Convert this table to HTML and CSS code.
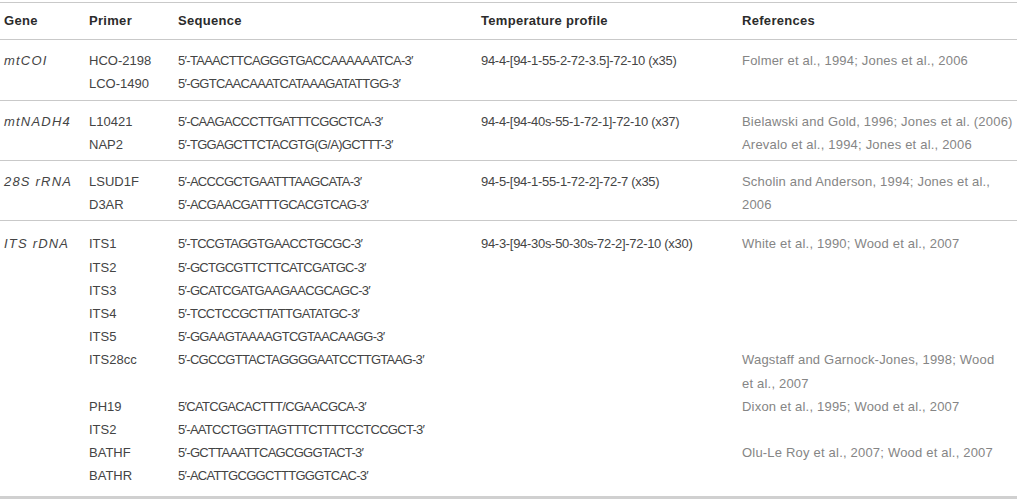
FILE: index.html
```html
<!DOCTYPE html>
<html lang="en">
  <head>
    <meta charset="UTF-8" />
    <title>Primers and PCR conditions</title>
    <link rel="stylesheet" href="styles.css">
  </head>
  <body>
    <table class="primers">
      <colgroup>
        <col class="c-gene" />
        <col class="c-primer" />
        <col class="c-seq" />
        <col class="c-temp" />
        <col class="c-ref" />
      </colgroup>
      <thead>
        <tr>
          <th>Gene</th>
          <th>Primer</th>
          <th>Sequence</th>
          <th>Temperature profile</th>
          <th>References</th>
        </tr>
      </thead>
      <tbody>
        <tr>
          <td class="gene">mtCOI</td>
          <td>HCO-2198</td>
          <td class="seq">5′-TAAACTTCAGGGTGACCAAAAAATCA-3′</td>
          <td class="temp">94-4-[94-1-55-2-72-3.5]-72-10 (x35)</td>
          <td class="ref">Folmer et al., 1994; Jones et al., 2006</td>
        </tr>
        <tr>
          <td></td>
          <td>LCO-1490</td>
          <td class="seq">5′-GGTCAACAAATCATAAAGATATTGG-3′</td>
          <td></td>
          <td></td>
        </tr>
      </tbody>
      <tbody>
        <tr>
          <td class="gene">mtNADH4</td>
          <td>L10421</td>
          <td class="seq">5′-CAAGACCCTTGATTTCGGCTCA-3′</td>
          <td class="temp">94-4-[94-40s-55-1-72-1]-72-10 (x37)</td>
          <td class="ref">Bielawski and Gold, 1996; Jones et al. (2006)</td>
        </tr>
        <tr>
          <td></td>
          <td>NAP2</td>
          <td class="seq">5′-TGGAGCTTCTACGTG(G/A)GCTTT-3′</td>
          <td></td>
          <td class="ref">Arevalo et al., 1994; Jones et al., 2006</td>
        </tr>
      </tbody>
      <tbody>
        <tr>
          <td class="gene">28S rRNA</td>
          <td>LSUD1F</td>
          <td class="seq">5′-ACCCGCTGAATTTAAGCATA-3′</td>
          <td class="temp">94-5-[94-1-55-1-72-2]-72-7 (x35)</td>
          <td class="ref" rowspan="2">Scholin and Anderson, 1994; Jones et al.,<br>2006</td>
        </tr>
        <tr>
          <td></td>
          <td>D3AR</td>
          <td class="seq">5′-ACGAACGATTTGCACGTCAG-3′</td>
          <td></td>
        </tr>
      </tbody>
      <tbody class="last">
        <tr>
          <td class="gene">ITS rDNA</td>
          <td>ITS1</td>
          <td class="seq">5′-TCCGTAGGTGAACCTGCGC-3′</td>
          <td class="temp">94-3-[94-30s-50-30s-72-2]-72-10 (x30)</td>
          <td class="ref">White et al., 1990; Wood et al., 2007</td>
        </tr>
        <tr>
          <td></td>
          <td>ITS2</td>
          <td class="seq">5′-GCTGCGTTCTTCATCGATGC-3′</td>
          <td></td>
          <td></td>
        </tr>
        <tr>
          <td></td>
          <td>ITS3</td>
          <td class="seq">5′-GCATCGATGAAGAACGCAGC-3′</td>
          <td></td>
          <td></td>
        </tr>
        <tr>
          <td></td>
          <td>ITS4</td>
          <td class="seq">5′-TCCTCCGCTTATTGATATGC-3′</td>
          <td></td>
          <td></td>
        </tr>
        <tr>
          <td></td>
          <td>ITS5</td>
          <td class="seq">5′-GGAAGTAAAAGTCGTAACAAGG-3′</td>
          <td></td>
          <td></td>
        </tr>
        <tr>
          <td></td>
          <td>ITS28cc</td>
          <td class="seq">5′-CGCCGTTACTAGGGGAATCCTTGTAAG-3′</td>
          <td></td>
          <td class="ref">Wagstaff and Garnock-Jones, 1998; Wood<br>et al., 2007</td>
        </tr>
        <tr>
          <td></td>
          <td>PH19</td>
          <td class="seq">5′CATCGACACTTT/CGAACGCA-3′</td>
          <td></td>
          <td class="ref">Dixon et al., 1995; Wood et al., 2007</td>
        </tr>
        <tr>
          <td></td>
          <td>ITS2</td>
          <td class="seq">5′-AATCCTGGTTAGTTTCTTTTCCTCCGCT-3′</td>
          <td></td>
          <td></td>
        </tr>
        <tr>
          <td></td>
          <td>BATHF</td>
          <td class="seq">5′-GCTTAAATTCAGCGGGTACT-3′</td>
          <td></td>
          <td class="ref">Olu-Le Roy et al., 2007; Wood et al., 2007</td>
        </tr>
        <tr>
          <td></td>
          <td>BATHR</td>
          <td class="seq">5′-ACATTGCGGCTTTGGGTCAC-3′</td>
          <td></td>
          <td></td>
        </tr>
      </tbody>
    </table>
  </body>
</html>
```

FILE: styles.css
```css
* {
  box-sizing: border-box;
}
body {
  margin: 0;
  font-family: "Liberation Sans", Arial, sans-serif;
  font-size: 13px;
  color: #444;
  background: #fff;
}
.primers {
  width: 100%;
  margin-top: 2px;
  border-collapse: collapse;
  table-layout: fixed;
  border-top: 1px solid #c9c9c9;
  border-bottom: 3px solid #d0d0d0;
}
.c-gene {
  width: 85px;
}
.c-primer {
  width: 89px;
}
.c-seq {
  width: 303px;
}
.c-temp {
  width: 261px;
}
th,
td {
  text-align: left;
  vertical-align: top;
  padding: 0 4px;
  line-height: 23.2px;
  white-space: nowrap;
}
thead th {
  padding-top: 6px;
  padding-bottom: 7px;
  font-weight: bold;
  color: #2b2b2b;
  letter-spacing: 0.3px;
  border-bottom: 1px solid #c9c9c9;
}
tbody + tbody {
  border-top: 1px solid #c9c9c9;
}
tbody tr:first-child td {
  padding-top: 9px;
}
tbody tr:last-child td {
  padding-bottom: 4px;
}
tbody.last tr:first-child td {
  padding-top: 11px;
}
tbody.last tr:last-child td {
  padding-bottom: 8px;
}
.gene {
  font-style: italic;
  letter-spacing: 1.2px;
}
.seq {
  letter-spacing: -0.7px;
}
.temp {
  letter-spacing: -0.3px;
}
.ref {
  color: #858585;
  letter-spacing: 0.2px;
}
```
